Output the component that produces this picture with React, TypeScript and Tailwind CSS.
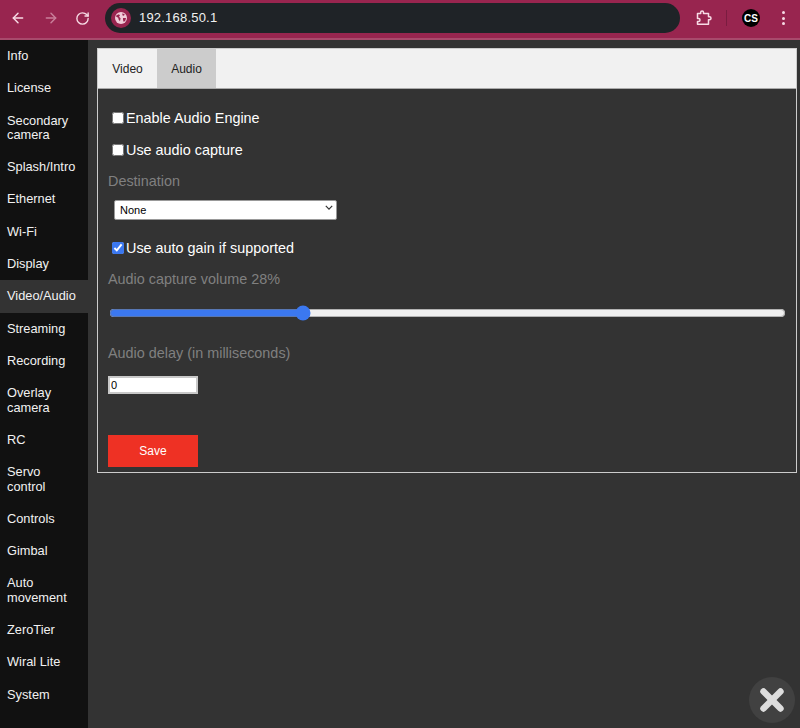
import { ArrowLeft, ArrowRight, RotateCw, X } from "lucide-react";

const menuItems = [
  "Info",
  "License",
  "Secondary camera",
  "Splash/Intro",
  "Ethernet",
  "Wi-Fi",
  "Display",
  "Video/Audio",
  "Streaming",
  "Recording",
  "Overlay camera",
  "RC",
  "Servo control",
  "Controls",
  "Gimbal",
  "Auto movement",
  "ZeroTier",
  "Wiral Lite",
  "System",
];

function BrowserBar() {
  return (
    <div className="flex h-[40px] items-center border-b-2 border-[#a84a6c] bg-[#98254f] pb-[2px]">
      <div className="flex w-[105px] items-center text-[#f7dbe5]">
        <ArrowLeft size={16} strokeWidth={2.2} className="ml-[10px]" />
        <ArrowRight size={16} strokeWidth={2.2} className="ml-[17px] text-[#c97f9a]" />
        <RotateCw size={15} strokeWidth={2.2} className="ml-[16px]" />
      </div>
      <div className="flex h-[30px] w-[575px] items-center rounded-full bg-[#1f2327] pl-[6px]">
        <div className="flex h-[20px] w-[20px] items-center justify-center rounded-full bg-[#98254f]">
          <svg viewBox="0 0 12 12" className="h-[12px] w-[12px]">
            <circle cx="6" cy="6" r="6" fill="#f0cdd9" />
            <path d="M1.5 3.2 4 2.2l1 1.4-1 1.2 1.6 1.4-.6 3-1.4-1.6-.4-1.8L1 4.6zM7.5 1.2l2.3 1.2-1 1.4-1.5-.6zM8 6h3l-.6 2.4-1.6 1.6-.8-2z" fill="#98254f" />
          </svg>
        </div>
        <span className="ml-[8px] text-[13px] tracking-[0.2px] text-[#f1f1f1]">192.168.50.1</span>
      </div>
      <svg
        viewBox="0 0 16 16"
        className="ml-[16px] h-[16px] w-[16px] text-[#f7dbe5]"
        fill="none"
        stroke="currentColor"
        strokeWidth="1.5"
        strokeLinejoin="round"
      >
        <path d="M1.5 3.5h3.2v-1.2a1.4 1.4 0 0 1 2.8 0v1.2h5v3.2h1a1.5 1.5 0 0 1 0 3h-1v4.6h-11v-2.8h1a1.5 1.5 0 0 0 0-3h-1z" />
      </svg>
      <div className="ml-[14px] h-[16px] w-px bg-[#7a1c40]" />
      <div className="ml-[15px] flex h-[18px] w-[18px] items-center justify-center rounded-full bg-black text-[10px] font-bold text-white">
        CS
      </div>
      <div className="ml-[22px] flex flex-col gap-[2.5px]">
        <span className="h-[3px] w-[3px] rounded-full bg-[#f7dbe5]" />
        <span className="h-[3px] w-[3px] rounded-full bg-[#f7dbe5]" />
        <span className="h-[3px] w-[3px] rounded-full bg-[#f7dbe5]" />
      </div>
    </div>
  );
}

function Sidebar() {
  return (
    <div className="w-[88px] shrink-0 bg-[#111111]">
      {menuItems.map((item) => (
        <div
          key={item}
          className={`py-[8.95px] pl-[7px] pr-[12px] text-[12.8px] leading-[14.4px] text-[#f1f1f1] ${
            item === "Video/Audio" ? "bg-[#333333]" : ""
          }`}
        >
          {item}
        </div>
      ))}
    </div>
  );
}

function CheckRow({ label, checked }: { label: string; checked?: boolean }) {
  return (
    <label className="flex h-[16px] items-center pl-[4px] text-[14.4px] text-white">
      <input
        type="checkbox"
        defaultChecked={checked}
        className="m-0 mb-[2px] h-[12px] w-[12px] accent-[#3b78f0]"
      />
      <span className="ml-[2px]">{label}</span>
    </label>
  );
}

function AudioPanel() {
  return (
    <div className="border border-[#cccccc]">
      <div className="flex h-[40px] border-b border-[#aaaaaa] bg-[#f1f1f1] text-[12px] text-[#222222]">
        <div className="flex w-[59px] items-center justify-center">Video</div>
        <div className="flex w-[59px] items-center justify-center bg-[#cccccc]">Audio</div>
      </div>
      <div className="h-[383px] px-[10px] pt-[22px]">
        <CheckRow label="Enable Audio Engine" />
        <div className="mt-[16px]">
          <CheckRow label="Use audio capture" />
        </div>
        <div className="mt-[14px] text-[14.4px] leading-[16px] text-[#808080]">Destination</div>
        <div className="relative ml-[6px] mt-[8px] w-[223px]">
          <select className="h-[20px] w-full appearance-none rounded-[2px] border border-[#999999] bg-white pl-[5px] text-[11px] text-black">
            <option>None</option>
          </select>
          <svg
            viewBox="0 0 10 6"
            className="absolute right-[4px] top-[8px] h-[5px] w-[8px] text-[#333333]"
            fill="none"
            stroke="currentColor"
            strokeWidth="1.5"
          >
            <path d="M1 1l4 4 4-4" />
          </svg>
        </div>
        <div className="mt-[20px]">
          <CheckRow label="Use auto gain if supported" checked />
        </div>
        <div className="mt-[14px] text-[14.4px] leading-[16px] text-[#808080]">Audio capture volume 28%</div>
        <input
          type="range"
          step={0.1}
          defaultValue={28.2}
          className="ml-[1px] mt-[18px] block h-[16px] w-[677px] accent-[#3b78f0]"
        />
        <div className="mt-[24px] text-[14.4px] leading-[16px] text-[#808080]">Audio delay (in milliseconds)</div>
        <input
          type="text"
          defaultValue="0"
          className="mt-[15px] block h-[18px] w-[90px] border-2 border-[#c8c8c8] bg-white pl-[1px] text-[11px] text-black outline-none"
        />
        <button className="mt-[41px] block h-[32px] w-[90px] bg-[#ee3124] text-[12px] text-white">Save</button>
      </div>
    </div>
  );
}

export default function App() {
  return (
    <div className="relative h-[728px] w-[800px] overflow-hidden bg-[#333333] font-['Liberation_Sans',Arial,sans-serif]">
      <BrowserBar />
      <div className="flex h-[688px]">
        <Sidebar />
        <div className="flex-1 pl-[9px] pr-[5px] pt-[8px]">
          <AudioPanel />
        </div>
      </div>
      <div className="absolute bottom-[5px] right-[5px] flex h-[46px] w-[46px] items-center justify-center rounded-full bg-[#414141]">
        <X size={34} strokeWidth={4.5} className="text-[#dddddd]" />
      </div>
    </div>
  );
}
